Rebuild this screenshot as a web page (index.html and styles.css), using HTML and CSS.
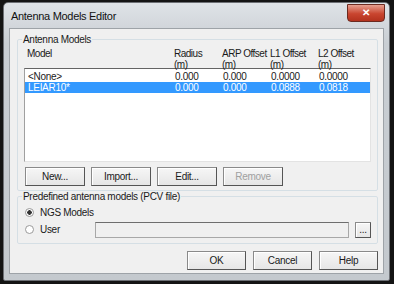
FILE: index.html
```html
<!DOCTYPE html>
<html lang="en">
  <head>
    <title>Antenna Models Editor</title>
    <meta charset="utf-8" />
    <link rel="stylesheet" href="styles.css">
  </head>
  <body>
    <div class="window">
      <div class="titlebar">
        <span class="title">Antenna Models Editor</span>
        <span class="close">&#x2715;</span>
      </div>
      <div class="client">
        <fieldset class="group models">
          <legend>Antenna Models</legend>
          <div class="headers">
            <span class="col-model">Model</span>
            <span class="col">Radius<br />(m)</span>
            <span class="col">ARP Offset<br />(m)</span>
            <span class="col">L1 Offset<br />(m)</span>
            <span class="col">L2 Offset<br />(m)</span>
          </div>
          <div class="list">
            <div class="row">
              <span class="col-model">&lt;None&gt;</span>
              <span class="col">0.000</span>
              <span class="col">0.000</span>
              <span class="col">0.0000</span>
              <span class="col">0.0000</span>
            </div>
            <div class="row selected">
              <span class="col-model">LEIAR10*</span>
              <span class="col">0.000</span>
              <span class="col">0.000</span>
              <span class="col">0.0888</span>
              <span class="col">0.0818</span>
            </div>
          </div>
          <div class="buttons">
            <button>New...</button>
            <button>Import...</button>
            <button>Edit...</button>
            <button disabled>Remove</button>
          </div>
        </fieldset>
        <fieldset class="group pcv">
          <legend>Predefined antenna models (PCV file)</legend>
          <label class="radio"><span class="dot checked"></span>NGS Models</label>
          <div class="user-row">
            <label class="radio"><span class="dot"></span>User</label>
            <input class="path" type="text" disabled />
            <button class="browse">...</button>
          </div>
        </fieldset>
        <div class="footer">
          <button>OK</button>
          <button>Cancel</button>
          <button>Help</button>
        </div>
      </div>
    </div>
  </body>
</html>
```

FILE: styles.css
```css
body {
  margin: 0;
  background-color: #141414;
  font-family: "Liberation Sans", Arial, sans-serif;
  font-size: 10px;
  letter-spacing: -0.3px;
  color: #1a1a1a;
}
.window {
  margin: 2px 4px 3px 3px;
  height: 279px;
  box-sizing: border-box;
  background: linear-gradient(#dfe3e7, #c9ced3 40px, #c4c9ce);
  border: 1px solid #6d7075;
  border-radius: 5px 5px 2px 2px;
  padding: 0 5px 6px 5px;
  display: flex;
  flex-direction: column;
}
.titlebar {
  height: 25px;
  display: flex;
  align-items: flex-start;
  justify-content: space-between;
}
.title {
  font-size: 11px;
  letter-spacing: -0.3px;
  margin: 7px 0 0 2px;
  color: #111;
}
.close {
  width: 36px;
  height: 16px;
  margin: 1px -1px 0 0;
  border-radius: 0 0 4px 4px;
  background: linear-gradient(#e8a090, #c9452f 55%, #b3321e);
  border: 1px solid #6b2a20;
  color: #fff;
  font-size: 10px;
  font-weight: bold;
  text-align: center;
  line-height: 16px;
}
.client {
  flex: 1;
  background-color: #f0f0f0;
  border: 1px solid #9ea3a8;
  padding: 5px 5px 0 7px;
  display: flex;
  flex-direction: column;
}
.group {
  border: 1px solid #d5dfe5;
  border-radius: 2px;
  margin: 0;
  padding: 0 6px;
}
.group legend {
  padding: 0 1px;
  margin-left: -2px;
}
.headers {
  display: flex;
  height: 20px;
  line-height: 11px;
  padding-top: 3px;
  letter-spacing: -0.5px;
}
.col-model {
  width: 147px;
  padding-left: 3px;
}
.col {
  width: 48px;
}
.list {
  background: #fff;
  border-top: 1px solid #646464;
  border-left: 1px solid #a0a0a0;
  border-right: 1px solid #e3e3e3;
  border-bottom: 1px solid #e3e3e3;
  height: 90px;
  padding-top: 2px;
}
.row {
  display: flex;
  height: 11px;
  line-height: 11px;
}
.row.selected {
  background-color: #3399ff;
  color: #fff;
}
.buttons {
  display: flex;
  gap: 6px;
  padding: 5px 0 4px 1px;
}
button {
  font-family: inherit;
  font-size: 10px;
  letter-spacing: -0.3px;
  width: 60px;
  height: 19px;
  padding: 0;
  background: linear-gradient(#f6f6f6, #e6e6e6);
  border: 1px solid #8a8a8a;
  border-right-color: #555;
  border-bottom-color: #555;
  box-shadow: inset 1px 1px 0 #fff;
  color: #1a1a1a;
}
button:disabled {
  color: #a0a0a0;
}
.pcv {
  margin-top: 0;
  padding-top: 2px;
  padding-bottom: 5px;
}
.radio {
  display: flex;
  align-items: center;
  height: 17px;
  padding-left: 1px;
}
.dot {
  width: 9px;
  height: 9px;
  border-radius: 50%;
  border: 1px solid #9a9a9a;
  background: #fff;
  margin-right: 6px;
  box-sizing: border-box;
}
.dot.checked {
  background: radial-gradient(circle, #333 0 2px, #fff 2.5px);
}
.user-row {
  display: flex;
  align-items: center;
}
.user-row .radio {
  width: 70px;
}
.path {
  flex: 1;
  height: 16px;
  box-sizing: border-box;
  border: 1px solid #a8a8a8;
  border-top-color: #6e6e6e;
  background: #f0f0f0;
  margin: 0 6px 0 0;
}
.browse {
  width: 16px;
  height: 16px;
}
.footer {
  display: flex;
  justify-content: flex-end;
  gap: 7px;
  padding-top: 7px;
}
.footer button {
  width: 59px;
}
```
